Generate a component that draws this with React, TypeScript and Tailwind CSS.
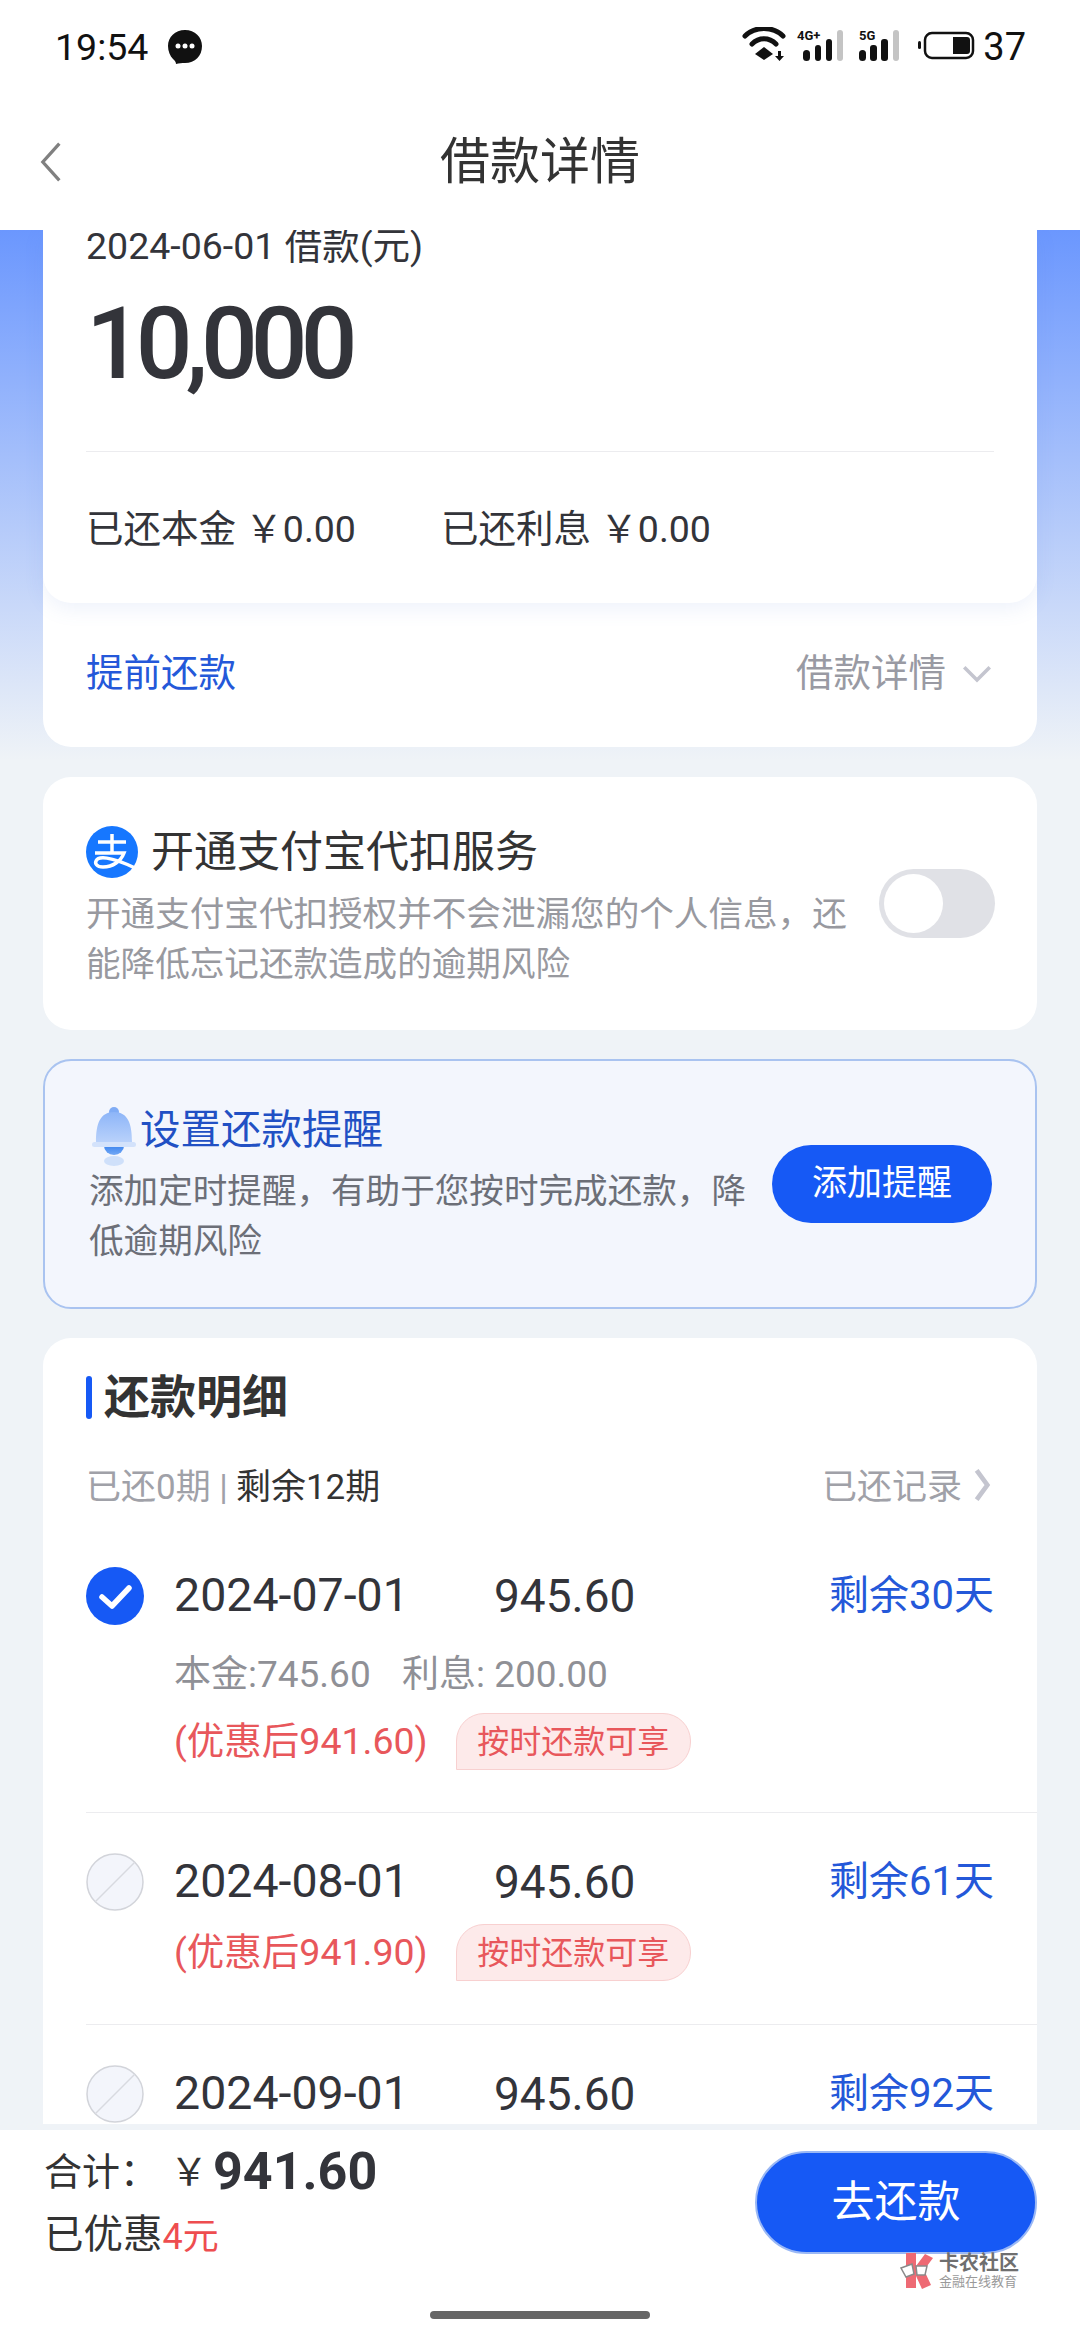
import React from 'react';

const StatusIcons = () => (
  <svg width="241" height="40" viewBox="0 0 241 40" className="block">
    {/* wifi */}
    <path d="M3 9 C13 -1 31 -1 41 9" fill="none" stroke="#111" strokeWidth="5" strokeLinecap="round" />
    <path d="M10 17 C17 10 27 10 34 17" fill="none" stroke="#111" strokeWidth="5" strokeLinecap="round" />
    <path d="M13 27 L22 20 L31 27 L22 33 Z" fill="#111" />
    <path d="M36 25 h3 v5 h3 l-4.500 5 l-4.500 -5 h3 Z" fill="#111" transform="translate(0,-1)" />
    {/* 4G+ signal */}
    <text x="55" y="13" fontSize="13" fontWeight="700" fill="#111" fontFamily="Roboto, sans-serif">4G+</text>
    <rect x="61" y="23" width="7" height="11" rx="3.500" fill="#111" />
    <rect x="73" y="18" width="6" height="16" rx="3" fill="#111" />
    <rect x="84" y="12" width="6" height="22" rx="3" fill="#111" />
    <rect x="95" y="3" width="6" height="31" rx="3" fill="#c4c4c4" />
    {/* 5G signal */}
    <text x="117" y="13" fontSize="13" fontWeight="700" fill="#111" fontFamily="Roboto, sans-serif">5G</text>
    <rect x="117" y="23" width="7" height="11" rx="3.500" fill="#111" />
    <rect x="128" y="18" width="7" height="16" rx="3" fill="#111" />
    <rect x="139" y="12" width="7" height="22" rx="3" fill="#111" />
    <rect x="151" y="3" width="6" height="31" rx="3" fill="#c4c4c4" />
    {/* battery */}
    <rect x="176" y="14" width="3" height="8" rx="1.500" fill="#111" />
    <rect x="183" y="6" width="48" height="25" rx="7" fill="none" stroke="#111" strokeWidth="2.500" />
    <path d="M211 10 h14 a3 3 0 0 1 3 3 v11 a3 3 0 0 1 -3 3 h-14 Z" fill="#111" />
  </svg>
);

const AlipayIcon = () => (
  <svg width="52" height="52" viewBox="0 0 52 52" className="shrink-0 block">
    <circle cx="26" cy="26" r="26" fill="#1677ff" />
    <g fill="none" stroke="#fff" strokeWidth="3.500">
      <path d="M12 16 H40" />
      <path d="M26 8 V26" />
      <path d="M9 27 H38 C35 35 27 41 17 41 C10 41 9 37 10 35 C12 30 24 30 49 42" />
    </g>
  </svg>
);

const BellIcon = () => (
  <svg width="44" height="62" viewBox="0 0 44 62" className="block">
    <defs>
      <linearGradient id="bellBody" x1="0" y1="0" x2="0" y2="1">
        <stop offset="0" stopColor="#8db5f8" />
        <stop offset="1" stopColor="#c0d6fb" />
      </linearGradient>
      <linearGradient id="bellClapper" x1="0" y1="0" x2="0" y2="1">
        <stop offset="0" stopColor="#3f86ee" />
        <stop offset="1" stopColor="#74a9f5" />
      </linearGradient>
    </defs>
    <ellipse cx="22" cy="55" rx="10" ry="5" fill="#cfe0fa" />
    <path d="M12 40 h20 a10 9 0 0 1 -20 0 Z" fill="url(#bellClapper)" />
    <circle cx="22" cy="6" r="5" fill="#80acf5" />
    <path d="M4 36 C4 18 8 6 22 6 C36 6 40 18 40 36 L42 41 H2 Z" fill="url(#bellBody)" />
    <rect x="0" y="36" width="44" height="5" rx="2.500" fill="#d3e2fb" />
  </svg>
);

const Chevron = ({ dir, color, size = 24, width = 3 }: { dir: 'left' | 'right' | 'down'; color: string; size?: number; width?: number }) => {
  const d = dir === 'left' ? 'M16 2 L7 12 L16 22' : dir === 'right' ? 'M8 1 L16 12 L8 23' : 'M3 8 L12 17 L21 8';
  return (
    <svg width={size} height={size} viewBox="0 0 24 24" className="block shrink-0">
      <path d={d} fill="none" stroke={color} strokeWidth={width} />
    </svg>
  );
};

const CheckCircle = ({ active }: { active: boolean }) =>
  active ? (
    <svg width="58" height="58" viewBox="0 0 58 58" className="block shrink-0">
      <circle cx="29" cy="29" r="29" fill="#1659f5" />
      <path d="M16 30 L26 39 L43 21" fill="none" stroke="#fff" strokeWidth="5.500" strokeLinecap="round" strokeLinejoin="round" />
    </svg>
  ) : (
    <svg width="58" height="58" viewBox="0 0 58 58" className="block shrink-0">
      <circle cx="29" cy="29" r="28" fill="#f3f5fb" stroke="#d2d4da" strokeWidth="1.500" />
      <path d="M9 49 L49 9" stroke="#d8dae0" strokeWidth="1.500" />
    </svg>
  );

const Badge = () => (
  <div className="ml-[28px] h-[57px] w-[235px] flex items-center justify-center text-[32px] text-[#e8575b] bg-[#fdeaea] border border-[#f8d0d0] rounded-[28px] rounded-bl-none">
    按时还款可享
  </div>
);

const RowHead = ({ active, date, left }: { active: boolean; date: string; left: string }) => (
  <div className="flex items-center h-[60px] pr-[43px]">
    <CheckCircle active={active} />
    <span className="ml-[30px] w-[320px] text-[46.500px] text-[#33343a]">{date}</span>
    <span className="text-[46px] text-[#33343a]">945.60</span>
    <span className="ml-auto text-[40px] text-[#2458d9]">{left}</span>
  </div>
);

const Discount = ({ price }: { price: string }) => (
  <div className="flex items-center pl-[88px]">
    <span className="text-[37.500px] text-[#e8575b] whitespace-nowrap">(优惠后{price})</span>
    <Badge />
  </div>
);

export default function App() {
  return (
    <div className="h-[2340px] w-[1080px] flex flex-col overflow-hidden bg-white font-['Roboto','Noto_Sans_CJK_SC',sans-serif]">
      {/* status bar and title */}
      <div className="relative z-10 h-[230px] shrink-0 bg-white">
        <div className="flex items-center h-[94px] pl-[55px] pr-[54px]">
          <span className="text-[37.500px] text-[#111]">19:54</span>
          <svg width="36" height="36" viewBox="0 0 36 36" className="ml-[19px] block">
            <path d="M18 1 C28 1 35 8 35 17 C35 27 28 34 18 34 C15 34 12 34 9 35 C9 33 8 32 6 30 C3 27 1 22 1 17 C1 8 8 1 18 1 Z" fill="#111" />
            <circle cx="11" cy="17" r="2.500" fill="#fff" />
            <circle cx="18" cy="17" r="2.500" fill="#fff" />
            <circle cx="25" cy="17" r="2.500" fill="#fff" />
          </svg>
          <div className="ml-auto flex items-center">
            <StatusIcons />
            <span className="text-[38px] text-[#111]">37</span>
          </div>
        </div>
        <div className="relative flex items-center justify-center h-[136px]">
          <span className="text-[50px] text-[#333]">借款详情</span>
          <div className="absolute left-[30px] top-[46px]">
            <Chevron dir="left" color="#808080" size={44} width={1.8} />
          </div>
        </div>
      </div>

      {/* scrolling content */}
      <div className="flex-1 min-h-0 overflow-hidden px-[43px] bg-[linear-gradient(180deg,#6b97fe_0,#eff3f7_530px)]">
        <div className="bg-white rounded-b-[28px]">
          <div className="h-[373px] px-[43px] bg-white rounded-b-[28px] shadow-[0_6px_20px_rgba(90,130,220,0.1)]">
            <div className="text-[37.500px] leading-[32px] text-[#33343a]">2024-06-01 借款(元)</div>
            <div className="mt-[38px] text-[100px] leading-[88px] font-medium tracking-[-7px] text-[#33343a]">10,000</div>
            <div className="mt-[63px] h-[1px] bg-[#ececef]" />
            <div className="mt-[52px] h-[50px] flex items-center text-[37.500px] text-[#33343a]">
              <span className="w-[355px]">已还本金 ￥0.00</span>
              <span>已还利息 ￥0.00</span>
            </div>
          </div>
          <div className="h-[144px] px-[43px] pb-[4px] flex items-center justify-between">
            <span className="text-[37.500px] text-[#2458d9]">提前还款</span>
            <div className="flex items-center gap-[14px]">
              <span className="text-[37.500px] text-[#999aa3]">借款详情</span>
              <Chevron dir="down" color="#c4c5cf" size={34} width={2.5} />
            </div>
          </div>
        </div>

        {/* alipay */}
        <div className="mt-[30px] h-[253px] bg-white rounded-[28px] pl-[43px] pr-[42px] flex items-center justify-between">
          <div className="pt-[9px]">
            <div className="flex items-center gap-[13px] h-[50px]">
              <AlipayIcon />
              <span className="text-[43px] text-[#333]">开通支付宝代扣服务</span>
            </div>
            <div className="mt-[12px] text-[34.600px] leading-[50px] text-[#98999f] whitespace-nowrap">
              开通支付宝代扣授权并不会泄漏您的个人信息，还
              <br />
              能降低忘记还款造成的逾期风险
            </div>
          </div>
          <div className="w-[116px] h-[69px] shrink-0 rounded-full bg-[#e0e1e6] p-[5px]">
            <div className="w-[59px] h-[59px] rounded-full bg-white" />
          </div>
        </div>

        {/* reminder */}
        <div className="mt-[29px] h-[250px] bg-[#f3f6fd] border-2 border-[#a9c3f0] rounded-[28px] pl-[44px] pr-[43px] flex items-center justify-between">
          <div>
            <div className="flex items-center h-[50px] mt-[3px]">
              <div className="ml-[3px] mt-[14px] mr-[4px]">
                <BellIcon />
              </div>
              <span className="text-[40.500px] text-[#2150c4]">设置还款提醒</span>
            </div>
            <div className="mt-[11px] text-[34.600px] leading-[50px] text-[#6c6f78] whitespace-nowrap">
              添加定时提醒，有助于您按时完成还款，降
              <br />
              低逾期风险
            </div>
          </div>
          <div className="w-[220px] h-[78px] rounded-full bg-[#1659f5] flex items-center justify-center text-[35px] text-white">添加提醒</div>
        </div>

        {/* repayment detail */}
        <div className="mt-[29px] bg-white rounded-t-[28px] pt-[34px] pl-[43px]">
          <div className="flex items-center h-[50px]">
            <div className="w-[6px] h-[43px] rounded-full bg-[#1659f5]" />
            <span className="ml-[12px] text-[46px] font-bold text-[#333]">还款明细</span>
          </div>
          <div className="mt-[41px] h-[50px] flex items-center pr-[39px] text-[35px]">
            <span className="text-[#a0a1a8]">已还0期 | </span>
            <span className="ml-[8px] text-[#333]">剩余12期</span>
            <span className="ml-auto text-[#a0a1a8]">已还记录</span>
            <div className="ml-[4px] -mt-[6px]">
              <Chevron dir="right" color="#c4c5cf" size={32} width={3.5} />
            </div>
          </div>

          <div className="mt-[53px]">
            <RowHead active date="2024-07-01" left="剩余30天" />
          </div>
          <div className="mt-[24px] h-[50px] pl-[88px] flex items-center text-[37px] text-[#8f9096]">
            <span className="w-[228px]">本金:745.60</span>
            <span>利息: 200.00</span>
          </div>
          <div className="mt-[13px]">
            <Discount price="941.60" />
          </div>
          <div className="mt-[42px] h-[1px] bg-[#ececef]" />

          <div className="mt-[39px]">
            <RowHead active={false} date="2024-08-01" left="剩余61天" />
          </div>
          <div className="mt-[12px]">
            <Discount price="941.90" />
          </div>
          <div className="mt-[43px] h-[1px] bg-[#ececef]" />

          <div className="mt-[39px]">
            <RowHead active={false} date="2024-09-01" left="剩余92天" />
          </div>
        </div>
      </div>

      {/* footer */}
      <div className="relative h-[210px] shrink-0 bg-white pl-[44px] pr-[43px] pt-[21px]">
        <div className="flex justify-between">
          <div>
            <div className="flex items-center h-[50px] -mt-[4px]">
              <span className="w-[126px] text-[38px] text-[#333]">合计：</span>
              <span className="text-[38px] text-[#333]">￥</span>
              <span className="ml-[5px] text-[52px] font-bold text-[#33343a]">941.60</span>
            </div>
            <div className="mt-[17px] flex items-end h-[50px]">
              <span className="text-[39.500px] text-[#333]">已优惠</span>
              <span className="text-[36px] text-[#ee4d4f]">4元</span>
            </div>
          </div>
          <div className="w-[282px] h-[103px] rounded-full bg-[#1659f5] border-2 border-[#9ab8f5] flex items-center justify-center text-[43px] text-white">去还款</div>
        </div>
        <div className="mt-[47px] w-[220px] h-[8px] ml-[386px] rounded-full bg-[#666]" />

        {/* watermark */}
        <div className="absolute left-[900px] top-[122px] flex items-center">
          <svg width="36" height="38" viewBox="0 0 36 38" className="block shrink-0">
            <path d="M6 1 H16 V14 L25 2 L33 6 L24 18 L31 33 L22 37 L16 24 V36 H6 Z" fill="#ee6a74" />
            <path d="M1 16 L12 12 L14 22 L6 25 Z" fill="#fff" stroke="#8a8a8a" strokeWidth="1.500" />
            <path d="M16 14 L27 14 L25 23 L17 23 Z" fill="#fff" stroke="#8a8a8a" strokeWidth="1.500" />
          </svg>
          <div className="ml-[3px]">
            <div className="text-[20px] leading-[20px] font-bold text-[#6f6f6f] whitespace-nowrap">卡农社区</div>
            <div className="mt-[2px] text-[13px] leading-[14px] text-[#9a9a9a] whitespace-nowrap">金融在线教育</div>
          </div>
        </div>
      </div>
    </div>
  );
}
